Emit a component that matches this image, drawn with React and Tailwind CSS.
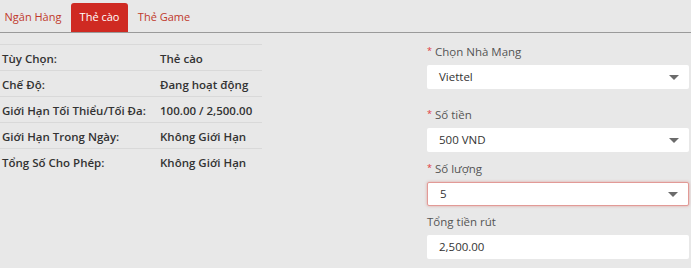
import { useState } from 'react';

const tabs = [
  { label: 'Ngân Hàng', w: 'w-[66px]' },
  { label: 'Thẻ cào', w: 'w-[57px]' },
  { label: 'Thẻ Game', w: 'w-[62px]' },
];

const info = [
  ['Tùy Chọn:', 'Thẻ cào'],
  ['Chế Độ:', 'Đang hoạt động'],
  ['Giới Hạn Tối Thiểu/Tối Đa:', '100.00 / 2,500.00'],
  ['Giới Hạn Trong Ngày:', 'Không Giới Hạn'],
  ['Tổng Số Cho Phép:', 'Không Giới Hạn'],
];

function Caret() {
  return (
    <svg width="10" height="5" viewBox="0 0 10 5" className="shrink-0">
      <path d="M0 0 L10 0 L5 5 Z" fill="#6b6b6b" />
    </svg>
  );
}

function Field({ label, required, value, select, active }) {
  return (
    <div>
      <div className="h-[20px] flex items-center text-[11.5px] text-[#555]">
        {required && <span className="text-[#e0383a] text-[9px] mr-[3px] -mt-[3px]">*</span>}
        {label}
      </div>
      <div
        className={`h-[24px] mt-[3px] bg-white flex items-center justify-between pl-[12px] pr-[10px] text-[11.5px] text-[#333] rounded-[2px] ${
          active ? 'border border-[#e29a96] shadow-[0_0_3px_rgba(210,80,70,0.45)]' : ''
        }`}
      >
        <span>{value}</span>
        {select && <Caret />}
      </div>
    </div>
  );
}

export default function App() {
  const [tab, setTab] = useState(1);

  return (
    <div className="w-[691px] h-[268px] bg-[#e8e8e8] overflow-hidden" style={{ fontFamily: '"Open Sans", "Noto Sans", sans-serif' }}>
      {/* Tabs */}
      <div className="h-[33px] flex items-end border-b border-[#9a9a9a] gap-[5px]">
        {tabs.map((t, i) => (
          <button
            key={t.label}
            onClick={() => setTab(i)}
            className={`${t.w} h-[29px] text-[11px] rounded-t-[3px] whitespace-nowrap ${
              i === tab ? 'bg-[#cf2a22] text-white' : 'text-[#c0392b]'
            }`}
          >
            {t.label}
          </button>
        ))}
      </div>

      <div className="flex justify-between pr-[2px]">
        {/* Info table */}
        <div className="w-[262px] pt-[11px]">
          {info.map(([k, v]) => (
            <div key={k} className="h-[26px] border-t border-[#d9d9d9] flex items-center pt-[2px] text-[11.5px] font-semibold text-[#333]">
              <span className="w-[160px] pl-[2px]">{k}</span>
              <span>{v}</span>
            </div>
          ))}
        </div>

        {/* Form */}
        <div className="w-[262px] pt-[9px]">
          <Field label="Chọn Nhà Mạng" required value="Viettel" select />
          <div className="h-[16px]" />
          <Field label="Số tiền" required value="500 VND" select />
          <div className="h-[7px]" />
          <Field label="Số lượng" required value="5" select active />
          <div className="h-[6px]" />
          <Field label="Tổng tiền rút" value="2,500.00" />
        </div>
      </div>
    </div>
  );
}
